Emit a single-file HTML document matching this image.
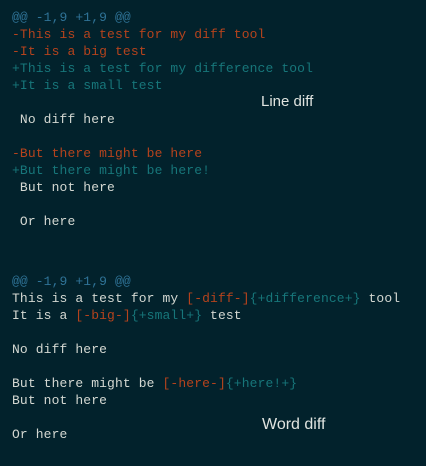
<!DOCTYPE html>
<html><head><style>
body{margin:0;width:426px;height:466px;background:#02222c;overflow:hidden;position:relative}
pre{position:absolute;left:12px;margin:0;font-family:"Liberation Mono",monospace;font-size:13px;line-height:17px;letter-spacing:0.12px;color:#d4d8d2}
.h{color:#2f7397}.r{color:#b5431d}.g{color:#17767a}
.l{position:absolute;font-family:"Liberation Sans",sans-serif;color:#e0e4e0}
</style></head><body>
<pre style="top:9px"><span class="h">@@ -1,9 +1,9 @@</span>
<span class="r">-This is a test for my diff tool</span>
<span class="r">-It is a big test</span>
<span class="g">+This is a test for my difference tool</span>
<span class="g">+It is a small test</span>

 No diff here

<span class="r">-But there might be here</span>
<span class="g">+But there might be here!</span>
 But not here

 Or here</pre>
<pre style="top:273px"><span class="h">@@ -1,9 +1,9 @@</span>
This is a test for my <span class="r">[-diff-]</span><span class="g">{+difference+}</span> tool
It is a <span class="r">[-big-]</span><span class="g">{+small+}</span> test

No diff here

But there might be <span class="r">[-here-]</span><span class="g">{+here!+}</span>
But not here

Or here</pre>
<div class="l" style="left:261px;top:93px;font-size:15px">Line diff</div>
<div class="l" style="left:262px;top:416px;font-size:16px">Word diff</div>
</body></html>
